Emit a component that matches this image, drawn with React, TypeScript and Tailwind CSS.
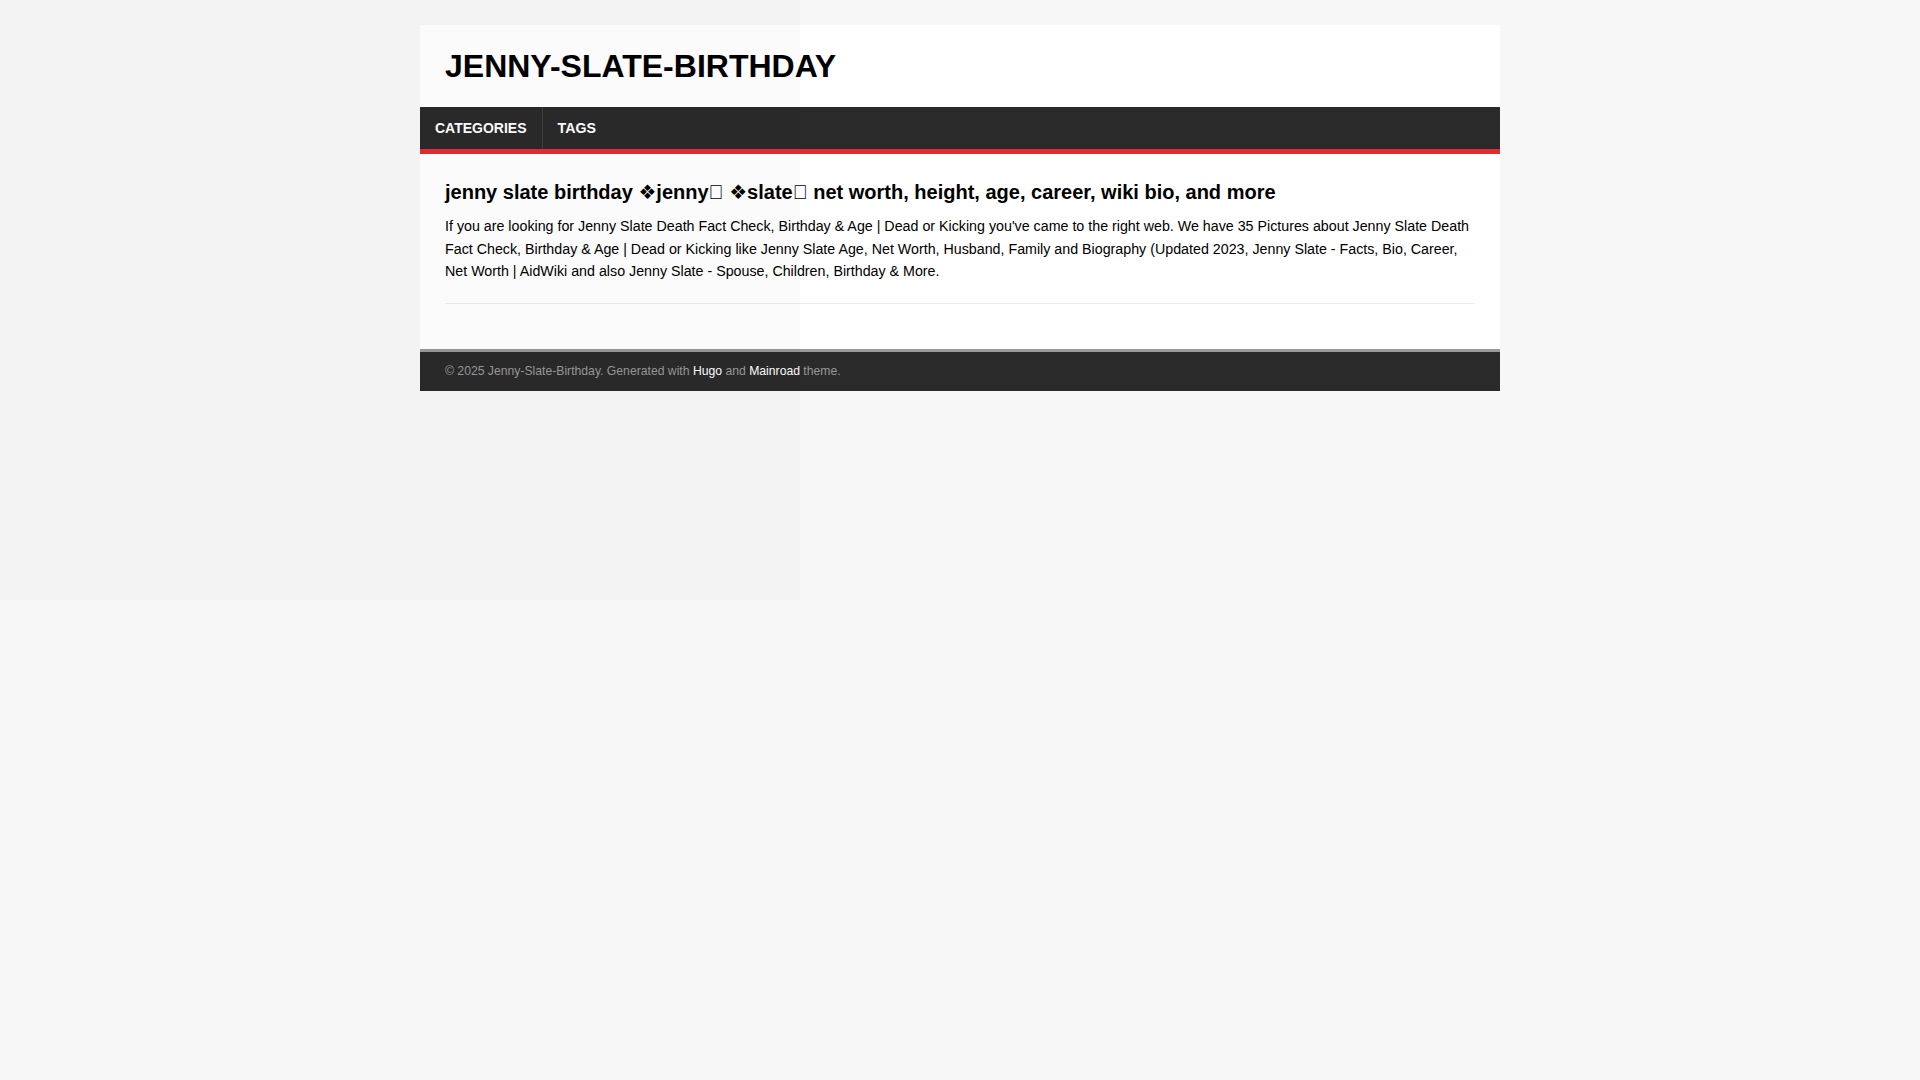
import React from "react";

const Diamond = () => (
  <span style={{ fontFamily: '"DejaVu Sans", sans-serif' }} className="font-normal">
    {"\u2756"}
  </span>
);

export default function App() {
  return (
    <div
      className="relative min-h-[1080px] bg-[#f7f7f7] text-black pt-[25px] pb-[25px]"
      style={{ fontFamily: '"Liberation Sans", Arial, sans-serif' }}
    >
      <div className="mx-auto w-[1080px]">
        <header className="bg-white px-[25px] py-[25px]">
          <a href="#" className="block text-[32px] leading-none font-bold uppercase text-black">
            Jenny-Slate-Birthday
          </a>
        </header>
        <nav className="bg-[#2a2a2a] border-b-[5px] border-[#e22d30]">
          <ul className="flex">
            <li className="border-r border-[#3f3f3f]">
              <a href="#" className="block px-[15px] py-[12px] text-[14px] leading-[18px] font-bold uppercase text-white">
                Categories
              </a>
            </li>
            <li>
              <a href="#" className="block px-[15px] py-[12px] text-[14.2px] leading-[18px] font-bold uppercase text-white">
                Tags
              </a>
            </li>
          </ul>
        </nav>
        <main className="bg-white px-[25px] pt-[25px] pb-[25px]">
          <article className="border-b border-[#ebebeb] pb-[20px] mb-[20px]">
            <h2 className="text-[20px] leading-[26px] font-bold mb-[10px]">
              jenny slate birthday <Diamond />jenny{"\uE000"} <Diamond />slate{"\uE000"} net worth, height, age, career, wiki bio, and more
            </h2>
            <p className="text-[14.25px] leading-[22.5px]">
              If you are looking for Jenny Slate Death Fact Check, Birthday &amp; Age | Dead or Kicking you've came to the right web. We have 35 Pictures about Jenny Slate Death Fact Check, Birthday &amp; Age | Dead or Kicking like Jenny Slate Age, Net Worth, Husband, Family and Biography (Updated 2023, Jenny Slate - Facts, Bio, Career, Net Worth | AidWiki and also Jenny Slate - Spouse, Children, Birthday &amp; More.
            </p>
          </article>
        </main>
        <footer className="bg-[#2a2a2a] border-t-[3px] border-[#999] px-[25px] py-[10px] text-[12.2px] leading-[19px] text-[#999]">
          © 2025 Jenny-Slate-Birthday. Generated with <a href="#" className="text-white">Hugo</a> and{" "}
          <a href="#" className="text-white">Mainroad</a> theme.
        </footer>
      </div>
      <div className="pointer-events-none absolute left-0 top-0 w-[800px] h-[600px] bg-black/[0.016]" />
    </div>
  );
}
